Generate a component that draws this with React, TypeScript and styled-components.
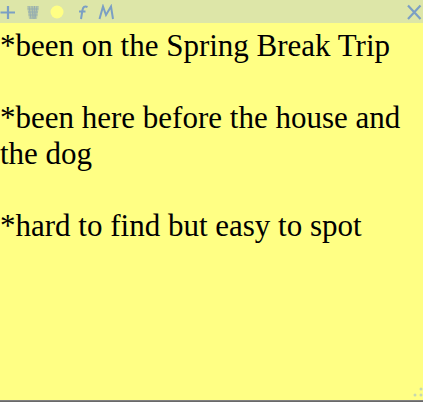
import styled, { createGlobalStyle } from 'styled-components'

const GlobalStyle = createGlobalStyle`
  html, body {
    margin: 0;
    padding: 0;
    background: #6f6f6f;
  }
`

const Page = styled.div`
  width: 423px;
  height: 402px;
  overflow: hidden;
  display: flex;
  flex-direction: column;
`

const Note = styled.div`
  position: relative;
  height: 400px;
  flex: none;
  background: #ffff84;
  display: flex;
  flex-direction: column;
`

const Toolbar = styled.div`
  height: 23px;
  flex: none;
  background: #dde6a8;
  display: flex;
  align-items: center;
  padding: 0 1px 0 0;
`

const ToolIcon = styled.svg<{ $gap?: number }>`
  display: block;
  flex: none;
  margin-left: ${(p) => p.$gap ?? 0}px;
`

const Spacer = styled.div`
  flex: 1;
`

const NoteText = styled.div`
  font-family: 'Liberation Serif', 'Times New Roman', serif;
  font-size: 31px;
  color: #000;
  white-space: pre-wrap;
  padding-top: 5px;
`

const Grip = styled.svg`
  position: absolute;
  right: 0;
  bottom: 0;
`

const Strip = styled.div`
  height: 2px;
  flex: none;
  overflow: hidden;
  background: linear-gradient(#8a8a8a, #5e5e5e);
`

const text = `*been on the Spring Break Trip

*been here before the house and the dog

*hard to find but easy to spot`

const App = () => {
  return (
    <Page>
      <GlobalStyle />
      <Note>
        <Toolbar>
          <ToolIcon width="16" height="16" viewBox="0 0 16 16" $gap={0}>
            <path d="M0.5 8.5H15M8 2v13" stroke="#7b9fc4" strokeWidth="2.2" fill="none" />
          </ToolIcon>
          <ToolIcon width="14" height="16" viewBox="0 0 14 16" $gap={10}>
            <path d="M1 2h12l-2 13H3z" fill="#b9c9a8" />
            <path
              d="M3 2l2 13M6 2l1 13M8.5 2L8 15M11 2l-2 13M1.5 5h11M2 8h10M2.5 11h9"
              stroke="#96aeb0"
              strokeWidth="1"
              fill="none"
            />
          </ToolIcon>
          <ToolIcon width="14" height="14" viewBox="0 0 14 14" $gap={10}>
            <circle cx="7" cy="7" r="6.5" fill="#ffff84" />
          </ToolIcon>
          <ToolIcon width="12" height="16" viewBox="0 0 12 16" $gap={13}>
            <path d="M10.5 3C7.5 1.5 6 3 5.5 6L4 15M2 7.5h6.5" stroke="#7b9fc4" strokeWidth="2" fill="none" />
          </ToolIcon>
          <ToolIcon width="16" height="16" viewBox="0 0 16 16" $gap={9}>
            <path d="M1.5 15L5 2.5 8 11 13 2.5 15 15" stroke="#7b9fc4" strokeWidth="2" fill="none" />
          </ToolIcon>
          <Spacer />
          <ToolIcon width="16" height="16" viewBox="0 0 16 16">
            <path d="M2 1.5L14.5 15M14.5 1.5L2 15" stroke="#7b9fc4" strokeWidth="2.2" fill="none" />
          </ToolIcon>
        </Toolbar>
        <NoteText>{text}</NoteText>
        <Grip width="14" height="14" viewBox="0 0 14 14">
          <circle cx="12" cy="3" r="1.5" fill="#c6d8b0" />
          <circle cx="12" cy="9" r="1.5" fill="#c6d8b0" />
          <circle cx="6" cy="9" r="1.5" fill="#c6d8b0" />
        </Grip>
      </Note>
      <Strip />
    </Page>
  )
}

export default App
